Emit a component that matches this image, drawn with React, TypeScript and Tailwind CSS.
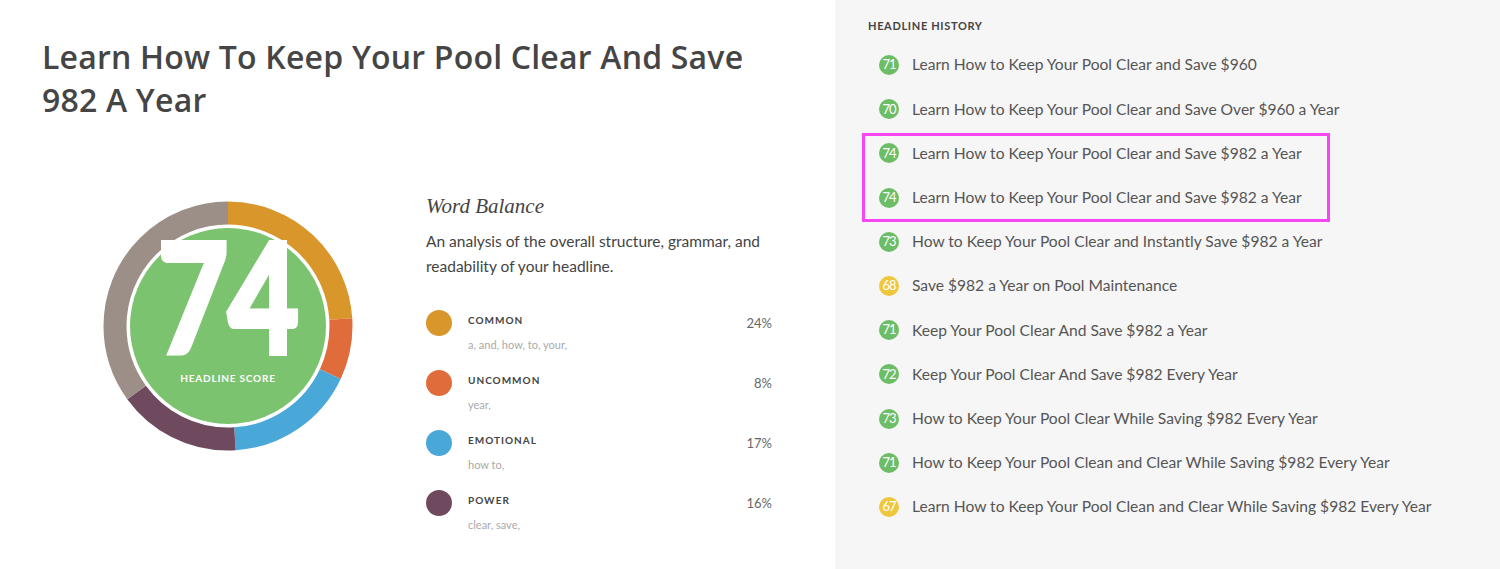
import React from 'react'

// Headline analyzer result: score donut, word balance and headline history.
const balance = [
  { label: 'COMMON', words: 'a, and, how, to, your,', pct: 24, color: '#d9972b' },
  { label: 'UNCOMMON', words: 'year,', pct: 8, color: '#e06c3c' },
  { label: 'EMOTIONAL', words: 'how to,', pct: 17, color: '#4aa8d9' },
  { label: 'POWER', words: 'clear, save,', pct: 16, color: '#6f4a5f' },
]

const history = [
  { score: 71, text: 'Learn How to Keep Your Pool Clear and Save $960' },
  { score: 70, text: 'Learn How to Keep Your Pool Clear and Save Over $960 a Year' },
  { score: 74, text: 'Learn How to Keep Your Pool Clear and Save $982 a Year' },
  { score: 74, text: 'Learn How to Keep Your Pool Clear and Save $982 a Year' },
  { score: 73, text: 'How to Keep Your Pool Clear and Instantly Save $982 a Year' },
  { score: 68, text: 'Save $982 a Year on Pool Maintenance' },
  { score: 71, text: 'Keep Your Pool Clear And Save $982 a Year' },
  { score: 72, text: 'Keep Your Pool Clear And Save $982 Every Year' },
  { score: 73, text: 'How to Keep Your Pool Clear While Saving $982 Every Year' },
  { score: 71, text: 'How to Keep Your Pool Clean and Clear While Saving $982 Every Year' },
  { score: 67, text: 'Learn How to Keep Your Pool Clean and Clear While Saving $982 Every Year' },
]

function Donut() {
  const segs = [...balance.map((b) => ({ pct: b.pct, color: b.color })), { pct: 35, color: '#9b8f87' }]
  let acc = 0
  return (
    <div className="relative w-[250px] h-[250px]">
      <svg width="250" height="250" viewBox="0 0 250 250" className="absolute inset-0">
        <g transform="rotate(-90 125 125)">
          {segs.map((s, i) => {
            const off = acc
            acc += s.pct
            return (
              <circle
                key={i}
                cx="125"
                cy="125"
                r="113"
                fill="none"
                stroke={s.color}
                strokeWidth="23"
                pathLength={100}
                strokeDasharray={`${s.pct} ${100 - s.pct}`}
                strokeDashoffset={-off}
              />
            )
          })}
        </g>
        <circle cx="125" cy="125" r="98" fill="#7cc36f" />
      </svg>
      <div className="absolute inset-0 flex flex-col items-center">
        <span className="mt-[34px] h-[118px] text-[152px] leading-[118px] font-bold text-white scale-x-[0.8] [-webkit-text-stroke:6px_#fff] font-['Lato',sans-serif]">
          74
        </span>
        <span className="mt-[18px] text-[10px] leading-[14px] font-bold tracking-[0.08em] text-white font-['Lato',sans-serif]">
          HEADLINE SCORE
        </span>
      </div>
    </div>
  )
}

export default function App() {
  return (
    <div className="flex w-[1500px] h-[569px] font-['Lato',sans-serif] text-[#444]">
      <div className="w-[835px] bg-white pl-[42px] pt-[35px]">
        <h1 className="text-[32px] leading-[43px] font-semibold text-[#454545] w-[720px] tracking-[0.2px] font-['Open_Sans',sans-serif]">
          Learn How To Keep Your Pool Clear And Save 982 A Year
        </h1>
        <div className="flex mt-[73px]">
          <div className="ml-[61px] mt-[7px]">
            <Donut />
          </div>
          <div className="ml-[73px] w-[346px]">
            <h2 className="italic text-[21px] leading-[24px] text-[#444] font-['Liberation_Serif',serif]">
              Word Balance
            </h2>
            <p className="mt-[11px] text-[15.5px] leading-[25px] text-[#444]">
              An analysis of the overall structure, grammar, and readability of your headline.
            </p>
            <div className="mt-[34px] flex flex-col gap-[22px]">
              {balance.map((b) => (
                <div key={b.label} className="flex items-start h-[38px]">
                  <span className="mt-[-3px] w-[26px] h-[26px] rounded-full shrink-0" style={{ background: b.color }} />
                  <div className="ml-[16px] flex-1">
                    <div className="text-[10px] leading-[14px] font-bold tracking-[0.1em] text-[#444]">{b.label}</div>
                    <div className="mt-[11px] text-[11px] leading-[14px] text-[#aaa]">{b.words}</div>
                  </div>
                  <span className="mt-[1px] text-[13px] leading-[18px] text-[#666]">{b.pct}%</span>
                </div>
              ))}
            </div>
          </div>
        </div>
      </div>
      <div className="relative flex-1 bg-[#f6f6f6] pl-[33px] pt-[19px]">
        <div className="text-[11px] leading-[14px] font-bold tracking-[0.06em] text-[#444]">HEADLINE HISTORY</div>
        <div className="mt-[10px] pl-[11px]">
          {history.map((h, i) => (
            <div key={i} className="flex items-center h-[44.2px]">
              <span
                className={`w-[20px] h-[20px] rounded-full flex items-center justify-center text-[13px] text-white tracking-[-1px] ${
                  h.score >= 70 ? 'bg-[#6dbd67]' : 'bg-[#efc73f]'
                }`}
              >
                {h.score}
              </span>
              <span className="ml-[13px] text-[15.6px] text-[#555]">{h.text}</span>
            </div>
          ))}
        </div>
        <div className="absolute left-[27px] top-[133px] w-[468px] h-[89px] border-[3px] border-[#f846f5]" />
      </div>
    </div>
  )
}
